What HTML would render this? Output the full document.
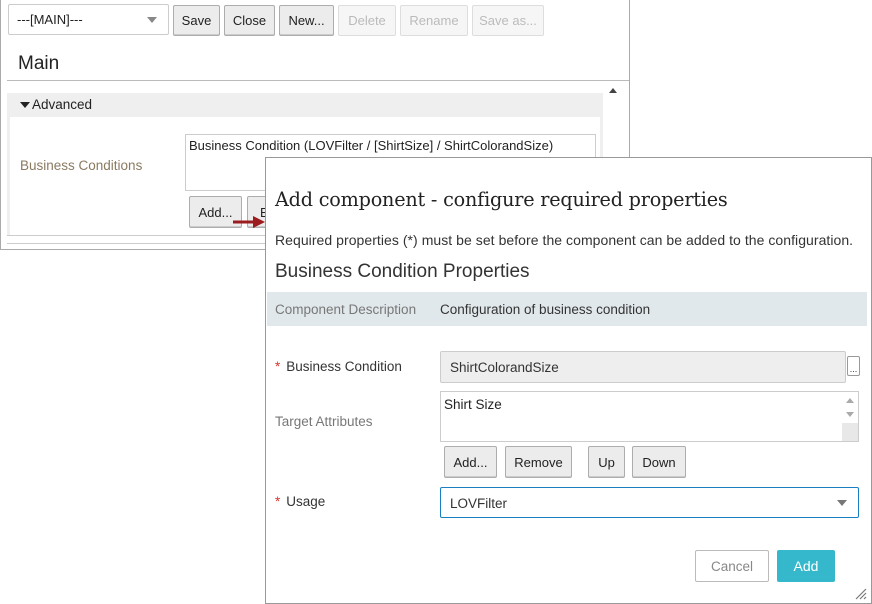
<!DOCTYPE html>
<html><head><meta charset="utf-8"><style>
*{box-sizing:border-box;margin:0;padding:0}
body{width:872px;height:604px;background:#fff;position:relative;overflow:hidden;font-family:"Liberation Sans",sans-serif;color:#333;font-size:13px}
.a{position:absolute}
.btn{position:absolute;border:1px solid #adadad;background:#ececec;border-radius:2px;font-size:13px;color:#222;display:flex;align-items:center;justify-content:center;box-shadow:inset 0 -1px 0 #ccc}
.dis{color:#bbb;border-color:#ddd;background:#f6f6f6;box-shadow:none}
.lbl{position:absolute;font-size:13.5px;color:#777}
.req{color:#d9342b;margin-right:6px}
</style></head><body>
<div class="a" style="left:0;top:0;width:630px;height:250px;border:1px solid #aaa;border-top:none;background:#fff"></div>
<div class="a" style="left:8px;top:4px;width:161px;height:31px;border:1px solid #ccc;border-radius:2px;padding:7px 8px;font-size:13px;color:#222">---[MAIN]---</div>
<div class="a" style="left:147px;top:17px;width:0;height:0;border-left:5px solid transparent;border-right:5px solid transparent;border-top:6px solid #888"></div>
<div class="btn" style="left:173px;top:5px;width:47px;height:31px">Save</div>
<div class="btn" style="left:224px;top:5px;width:51px;height:31px">Close</div>
<div class="btn" style="left:279px;top:5px;width:55px;height:31px">New...</div>
<div class="btn dis" style="left:338px;top:5px;width:58px;height:31px">Delete</div>
<div class="btn dis" style="left:400px;top:5px;width:68px;height:31px">Rename</div>
<div class="btn dis" style="left:472px;top:5px;width:72px;height:31px">Save as...</div>
<div class="a" style="left:18px;top:53px;font-size:19px;color:#222">Main</div>
<div class="a" style="left:7px;top:80px;width:622px;height:1px;background:#bbb"></div>
<div class="a" style="left:7px;top:93px;width:596px;height:24px;background:#efefef"></div>
<div class="a" style="left:20px;top:102px;width:0;height:0;border-left:5px solid transparent;border-right:5px solid transparent;border-top:6px solid #222"></div>
<div class="a" style="left:32px;top:97px;font-size:13.5px;color:#222">Advanced</div>
<div class="a" style="left:609px;top:88px;width:0;height:0;border-left:4px solid transparent;border-right:4px solid transparent;border-bottom:5px solid #444"></div>
<div class="a" style="left:7px;top:117px;width:3px;height:119px;background:#efefef"></div>
<div class="a" style="left:600px;top:117px;width:3px;height:119px;background:#efefef"></div>
<div class="a" style="left:7px;top:235px;width:596px;height:1px;background:#ccc"></div>
<div class="a" style="left:7px;top:243px;width:596px;height:1px;background:#ccc"></div>
<div class="lbl" style="left:20px;top:158px;color:#8a7a60">Business Conditions</div>
<div class="a" style="left:185px;top:134px;width:411px;height:57px;border:1px solid #ccc;padding:3px 3px;font-size:13px;color:#222">Business Condition (LOVFilter / [ShirtSize] / ShirtColorandSize)</div>
<div class="btn" style="left:189px;top:196px;width:53px;height:32px">Add...</div>
<div class="btn" style="left:247px;top:196px;width:40px;height:32px;justify-content:flex-start;padding-left:12px">E</div>
<div class="a" style="left:265px;top:157px;width:607px;height:447px;border:1px solid #999;background:#fff"></div>
<div class="a" style="left:275px;top:188px;font-family:'DejaVu Serif','Liberation Serif',serif;font-size:19.2px;color:#222;letter-spacing:-0.2px">Add component - configure required properties</div>
<div class="a" style="left:275px;top:232px;font-size:14px;color:#333;letter-spacing:0.05px">Required properties (*) must be set before the component can be added to the configuration.</div>
<div class="a" style="left:275px;top:261px;font-size:19px;color:#333">Business Condition Properties</div>
<div class="a" style="left:267px;top:292px;width:600px;height:34px;background:#e1e8eb"></div>
<div class="lbl" style="left:275px;top:302px;color:#777">Component Description</div>
<div class="a" style="left:440px;top:302px;font-size:13.5px;color:#333">Configuration of business condition</div>
<div class="lbl" style="left:275px;top:359px;color:#333"><span class="req">*</span>Business Condition</div>
<div class="a" style="left:440px;top:351px;width:406px;height:32px;border:1px solid #ccc;background:#eee;border-radius:2px;padding:8px 9px;font-size:13.5px;color:#333">ShirtColorandSize</div>
<div class="a" style="left:847px;top:356px;width:13px;height:20px;border:1px solid #999;border-radius:2px;font-size:9px;line-height:24px;text-align:center">...</div>
<div class="lbl" style="left:275px;top:414px">Target Attributes</div>
<div class="a" style="left:440px;top:391px;width:419px;height:51px;border:1px solid #ccc;padding:5px 3px;font-size:13.5px;color:#222">Shirt Size</div>
<div class="a" style="left:846px;top:398px;border-left:4px solid transparent;border-right:4px solid transparent;border-bottom:5px solid #aaa"></div>
<div class="a" style="left:846px;top:412px;border-left:4px solid transparent;border-right:4px solid transparent;border-top:5px solid #aaa"></div>
<div class="a" style="left:842px;top:423px;width:16px;height:18px;background:#e8e8e8"></div>
<div class="btn" style="left:444px;top:446px;width:53px;height:32px">Add...</div>
<div class="btn" style="left:505px;top:446px;width:67px;height:32px">Remove</div>
<div class="btn" style="left:588px;top:446px;width:37px;height:32px">Up</div>
<div class="btn" style="left:632px;top:446px;width:54px;height:32px">Down</div>
<div class="lbl" style="left:275px;top:494px;color:#333"><span class="req">*</span>Usage</div>
<div class="a" style="left:440px;top:487px;width:419px;height:31px;border:1px solid #1a7fc1;border-radius:2px;padding:8px 9px;font-size:13.5px;color:#333">LOVFilter</div>
<div class="a" style="left:837px;top:500px;border-left:5px solid transparent;border-right:5px solid transparent;border-top:6px solid #777"></div>
<div class="a" style="left:695px;top:550px;width:74px;height:32px;border:1px solid #bbb;border-radius:2px;color:#888;display:flex;align-items:center;justify-content:center;font-size:13.5px">Cancel</div>
<div class="a" style="left:777px;top:550px;width:58px;height:32px;background:#35b8cc;border-radius:2px;color:#fff;display:flex;align-items:center;justify-content:center;font-size:14px">Add</div>
<svg class="a" style="left:852px;top:585px" width="16" height="16"><path d="M4 14L14 4M8 14L14 8M12 14L14 12" stroke="#777" stroke-width="1.2"/></svg>
<svg class="a" style="left:232px;top:215px" width="36" height="14"><path d="M1 7H22" stroke="#9b1b1f" stroke-width="3"/><path d="M21 1L33 7L21 13Z" fill="#9b1b1f"/></svg>
</body></html>
